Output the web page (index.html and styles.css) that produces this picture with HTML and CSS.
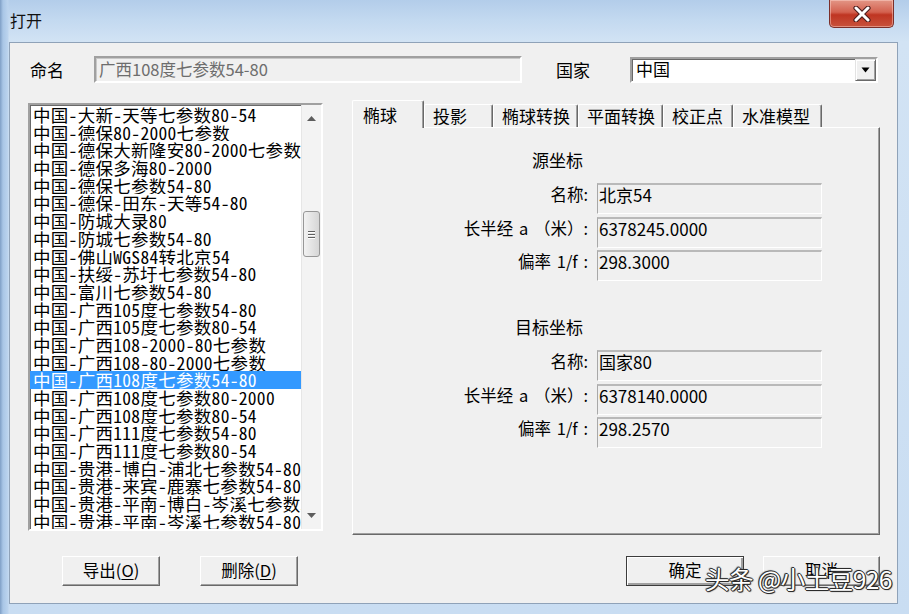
FILE: index.html
```html
<!DOCTYPE html>
<html lang="zh">
<head>
<meta charset="utf-8">
<title>打开</title>
<link rel="stylesheet" href="styles.css">
</head>
<body>
<div class="win">
  <div class="titlebar">
    <span class="title">打开</span>
    <div class="close">
      <svg width="20" height="16" viewBox="0 0 20 16">
        <path d="M4 2 L16 14 M16 2 L4 14" stroke="#4a1c1c" stroke-width="5.2" stroke-linecap="round" fill="none"/>
        <path d="M4 2 L16 14 M16 2 L4 14" stroke="#ffffff" stroke-width="3" stroke-linecap="round" fill="none"/>
      </svg>
    </div>
  </div>
  <div class="client">
    <div class="top-row">
      <span class="lbl lbl-name">命名</span>
      <div class="edit">广西108度七参数54-80</div>
      <span class="lbl lbl-country">国家</span>
      <div class="combo">
        <span class="combo-text">中国</span>
        <div class="drop"><svg width="9" height="6" viewBox="0 0 9 6"><path d="M0.5 0.5 H8.5 L4.5 5.5 Z" fill="#000"/></svg></div>
      </div>
    </div>
    <div class="main">
      <div class="listbox">
        <ul class="items">
          <li>中国-大新-天等七参数80-54</li>
          <li>中国-德保80-2000七参数</li>
          <li>中国-德保大新隆安80-2000七参数</li>
          <li>中国-德保多海80-2000</li>
          <li>中国-德保七参数54-80</li>
          <li>中国-德保-田东-天等54-80</li>
          <li>中国-防城大录80</li>
          <li>中国-防城七参数54-80</li>
          <li>中国-佛山WGS84转北京54</li>
          <li>中国-扶绥-苏圩七参数54-80</li>
          <li>中国-富川七参数54-80</li>
          <li>中国-广西105度七参数54-80</li>
          <li>中国-广西105度七参数80-54</li>
          <li>中国-广西108-2000-80七参数</li>
          <li>中国-广西108-80-2000七参数</li>
          <li class="sel">中国-广西108度七参数54-80</li>
          <li>中国-广西108度七参数80-2000</li>
          <li>中国-广西108度七参数80-54</li>
          <li>中国-广西111度七参数54-80</li>
          <li>中国-广西111度七参数80-54</li>
          <li>中国-贵港-博白-浦北七参数54-80</li>
          <li>中国-贵港-来宾-鹿寨七参数54-80</li>
          <li>中国-贵港-平南-博白-岑溪七参数54-80</li>
          <li>中国-贵港-平南-岑溪七参数54-80</li>
          <li>中国-贵港-平南七参数54-80</li>
        </ul>
        <div class="vscroll">
          <div class="arrow up"><svg width="9" height="5" viewBox="0 0 9 5"><path d="M0 5 L4.5 0 L9 5 Z" fill="#5d5d5d"/></svg></div>
          <div class="track">
            <div class="thumb"><span></span><span></span><span></span></div>
          </div>
          <div class="arrow down"><svg width="9" height="5" viewBox="0 0 9 5"><path d="M0 0 L4.5 5 L9 0 Z" fill="#5d5d5d"/></svg></div>
        </div>
      </div>
      <div class="tabs">
        <div class="tabstrip">
          <div class="tab active t1">椭球</div>
          <div class="tab t2">投影</div>
          <div class="tab t3">椭球转换</div>
          <div class="tab t4">平面转换</div>
          <div class="tab t5">校正点</div>
          <div class="tab t6">水准模型</div>
        </div>
        <div class="panel">
          <div class="group">
            <div class="heading">源坐标</div>
            <div class="flabel">名称:</div><div class="fbox">北京54</div>
            <div class="flabel">长半经 a （米）:</div><div class="fbox">6378245.0000</div>
            <div class="flabel">偏率 1/f :</div><div class="fbox">298.3000</div>
          </div>
          <div class="group group2">
            <div class="heading">目标坐标</div>
            <div class="flabel">名称:</div><div class="fbox">国家80</div>
            <div class="flabel">长半经 a （米）:</div><div class="fbox">6378140.0000</div>
            <div class="flabel">偏率 1/f :</div><div class="fbox">298.2570</div>
          </div>
        </div>
      </div>
    </div>
    <div class="buttons">
      <div class="btn b-export">导出(<u>O</u>)</div>
      <div class="btn b-delete">删除(<u>D</u>)</div>
      <div class="btn b-ok">确定</div>
      <div class="btn b-cancel">取消</div>
    </div>
  </div>
  <div class="watermark">头条 @小土豆926</div>
</div>
</body>
</html>
```
FILE: styles.css
```css
* { box-sizing: border-box; }
html, body { margin: 0; padding: 0; }
body {
  width: 909px;
  height: 614px;
  overflow: hidden;
  font-family: "Noto Sans CJK SC", "Liberation Sans", sans-serif;
  color: #000;
}
.win {
  position: relative;
  width: 909px;
  height: 614px;
  background:
    linear-gradient(90deg, #7f9fc6 0px, #a9c6e6 3px, #bcd4ee 8px, rgba(200,220,242,0) 9px),
    linear-gradient(180deg, #b3cdea 0px, #c3d9f0 20px, #d2e3f4 42px, #c9ddf2 100%);
}
.titlebar {
  height: 42px;
  display: flex;
  justify-content: space-between;
  align-items: flex-start;
  padding-left: 10px;
}
.title {
  font-size: 16px;
  line-height: 18px;
  margin-top: 11px;
  color: #111;
}
.close {
  width: 65px;
  height: 28px;
  margin-right: 15px;
  border: 1px solid #7b2f2a;
  border-top: none;
  border-radius: 0 0 5px 5px;
  background: linear-gradient(180deg, #e39686 0%, #d3614f 45%, #bf3522 55%, #c8523c 100%);
  box-shadow: inset 0 0 0 1px rgba(255,220,210,0.45);
  display: flex;
  align-items: center;
  justify-content: center;
}
.client {
  margin: 0 11px 0 9px;
  height: 562px;
  background: #f0f0f0;
  border: 1px solid #8fa2b8;
}
.top-row {
  display: flex;
  align-items: center;
  height: 27px;
  margin-top: 13px;
}
.lbl { font-size: 17px; line-height: 20px; }
.lbl-name { margin-left: 20px; width: 64px; }
.lbl-country { margin-left: 34px; width: 74px; }
.edit {
  width: 428px;
  height: 27px;
  border-style: solid;
  border-width: 2px;
  border-color: #a0a0a0 #ffffff #ffffff #a0a0a0;
  box-shadow: inset 1px 1px 0 #c8c8c8;
  background: #f0f0f0;
  color: #6d6d6d;
  font-size: 16.5px;
  line-height: 22px;
  padding-left: 3px;
  white-space: nowrap;
}
.combo {
  width: 248px;
  height: 26px;
  background: #fff;
  border-style: solid;
  border-width: 2px;
  border-color: #a0a0a0 #ffffff #ffffff #a0a0a0;
  box-shadow: inset 1px 1px 0 #696969;
  display: flex;
  justify-content: space-between;
}
.combo-text {
  font-size: 17px;
  line-height: 20px;
  padding-left: 4px;
}
.drop {
  width: 21px;
  height: 22px;
  background: #f0f0f0;
  border-style: solid;
  border-width: 1px;
  border-color: #e3e3e3 #696969 #696969 #e3e3e3;
  box-shadow: inset 1px 1px 0 #fff, inset -1px -1px 0 #a0a0a0;
  display: flex;
  align-items: center;
  justify-content: center;
}
.main {
  display: flex;
  align-items: flex-start;
  margin-top: 17px;
}
.listbox {
  margin-top: 3px;
  margin-left: 18px;
  width: 295px;
  height: 428px;
  background: #fff;
  border-style: solid;
  border-width: 2px;
  border-color: #a0a0a0 #ffffff #ffffff #a0a0a0;
  box-shadow: inset 1px 1px 0 #696969;
  display: flex;
  overflow: hidden;
}
.items {
  list-style: none;
  margin: 0;
  padding: 1px 0 0 0;
  width: 271px;
  height: 424px;
  overflow: hidden;
  font-family: "Noto Sans Mono CJK SC", "Noto Sans CJK SC", sans-serif;
  font-size: 17.5px;
  letter-spacing: 0.3px;
}
.items li {
  height: 17.7px;
  line-height: 17.7px;
  padding-left: 3px;
  white-space: nowrap;
  overflow: hidden;
}
.items li.sel {
  background: #3399ff;
  color: #fff;
}
.vscroll {
  width: 20px;
  height: 424px;
  background: #f3f3f3;
  border-left: 1px solid #e6e6e6;
  display: flex;
  flex-direction: column;
}
.arrow {
  height: 18px;
  display: flex;
  align-items: center;
  justify-content: center;
}
.arrow.up { margin-top: 4px; }
.track { flex: 1; padding-top: 84px; }
.thumb {
  margin: 0 1px;
  height: 46px;
  border: 1px solid #979797;
  border-radius: 3px;
  background: linear-gradient(90deg, #f2f2f2, #e4e4e4 50%, #d6d6d6);
  display: flex;
  flex-direction: column;
  align-items: center;
  justify-content: center;
  gap: 2px;
}
.thumb span {
  width: 7px;
  height: 1px;
  background: #606060;
  box-shadow: 0 1px 0 #fff;
}
.arrow.down { margin-bottom: 5px; }
.tabs {
  margin-left: 29px;
  width: 528px;
}
.tabstrip {
  display: flex;
  align-items: flex-end;
  height: 27px;
  position: relative;
  z-index: 1;
}
.tab {
  height: 23px;
  background: #f0f0f0;
  border-left: 1px solid #fff;
  border-top: 1px solid #fff;
  border-right: 1px solid #696969;
  box-shadow: inset -1px 0 0 #a0a0a0;
  border-radius: 2px 2px 0 0;
  font-size: 17px;
  line-height: 22px;
  padding-left: 8px;
  white-space: nowrap;
}
.tab.active {
  height: 28px;
  margin-bottom: -1px;
  padding-left: 10px;
  padding-top: 4px;
  line-height: 20px;
}
.t1 { width: 72px; }
.t2 { width: 69px; }
.t3 { width: 85px; }
.t4 { width: 85px; }
.t5 { width: 70px; }
.t6 { width: 89px; }
.panel {
  height: 408px;
  border-left: 1px solid #fff;
  border-top: 1px solid #fff;
  border-right: 1px solid #696969;
  border-bottom: 1px solid #696969;
  box-shadow: inset -1px -1px 0 #a0a0a0;
  padding-top: 22px;
}
.group {
  display: grid;
  grid-template-columns: 235px 225px;
  column-gap: 9px;
  row-gap: 2.5px;
}
.group2 { margin-top: 36px; }
.heading {
  grid-column: 1;
  height: 20px;
  line-height: 20px;
  font-size: 17px;
  text-align: right;
  padding-right: 5px;
  margin-bottom: 10.5px;
}
.flabel {
  grid-column: 1;
  font-size: 16.5px;
  line-height: 22px;
  text-align: right;
  white-space: nowrap;
  word-spacing: 2px;
}
.fbox {
  grid-column: 2;
  height: 31px;
  border-style: solid;
  border-width: 2px 1px 1px 1px;
  border-color: #b9b9b9 #ffffff #ffffff #a8a8a8;
  font-size: 17px;
  line-height: 20px;
  padding-left: 1px;
  white-space: nowrap;
}
.buttons {
  display: flex;
  margin-top: 21px;
  height: 30px;
}
.btn {
  height: 30px;
  background: #f0f0f0;
  border-style: solid;
  border-width: 1px;
  border-color: #ffffff #696969 #696969 #ffffff;
  box-shadow: inset -1px -1px 0 #a0a0a0;
  font-size: 16.5px;
  line-height: 27px;
  text-align: center;
}
.btn u { text-underline-offset: 2px; }
.b-export { margin-left: 52px; width: 98px; }
.b-delete { margin-left: 40px; width: 98px; }
.b-ok {
  margin-left: 328px;
  width: 118px;
  border: 1px solid #3c3c3c;
  box-shadow: inset 1px 1px 0 #fff, inset -2px -2px 0 #a0a0a0;
}
.b-cancel { margin-left: 19px; width: 117px; }
.watermark {
  position: absolute;
  left: 705px;
  top: 563px;
  font-family: "Noto Sans CJK SC", sans-serif;
  font-size: 24.5px;
  line-height: 32px;
  color: #fff;
  letter-spacing: -0.5px;
  text-shadow: 1px 0 0 #2a2a2a, -1px 0 0 #2a2a2a, 0 1px 0 #2a2a2a, 0 -1px 0 #2a2a2a, 1px 1px 1px #2a2a2a, -1px -1px 1px #555;
}
```
